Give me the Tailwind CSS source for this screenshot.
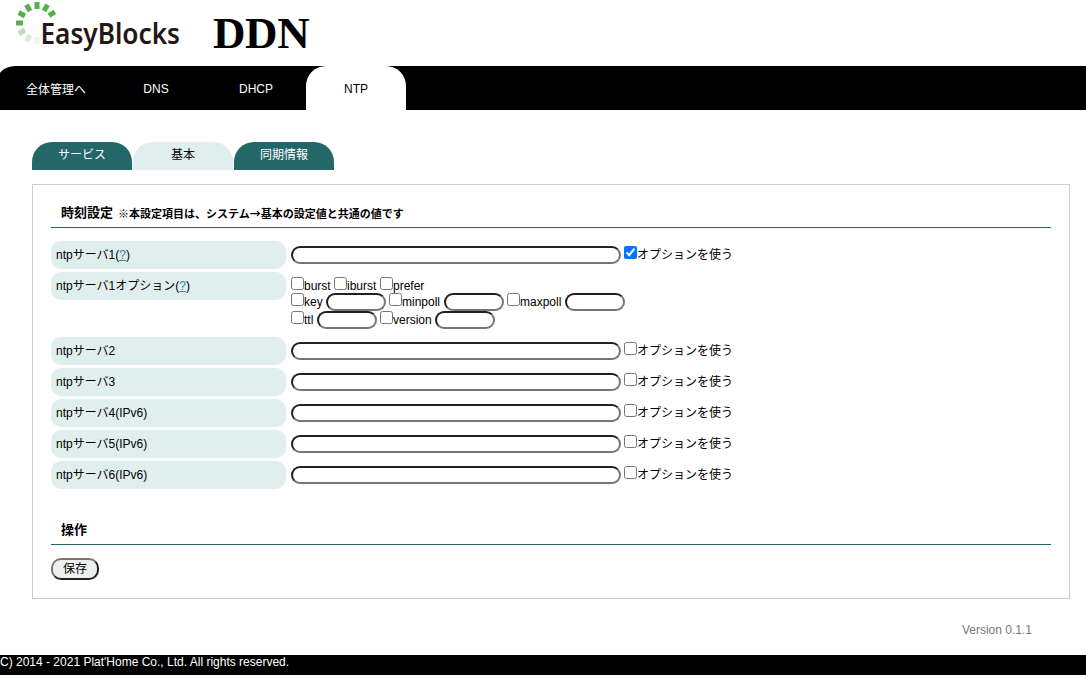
<!DOCTYPE html>
<html lang="ja">
<head>
<meta charset="utf-8">
<title>EasyBlocks DDN</title>
<script src="https://cdn.jsdelivr.net/npm/@tailwindcss/browser@4"></script>
</head>
<body class="h-[681px] overflow-hidden bg-white font-['Liberation_Sans','Noto_Sans_CJK_JP',sans-serif] text-[12px] leading-4 text-black">
<header class="flex h-[66px] items-start">
  <svg class="h-[66px] w-[200px] shrink-0" viewBox="0 0 200 66">
    <g fill="#55b14a">
      <path d="M34.5 2h5v7h-5z"/>
      <path d="M34.5 2h5v7h-5z" transform="rotate(-30 37 23)"/>
      <path d="M34.5 2h5v7h-5z" transform="rotate(-60 37 23)"/>
      <path d="M34.5 2h5v7h-5z" transform="rotate(-90 37 23)"/>
      <path d="M34.5 2h5v7h-5z" transform="rotate(30 37 23)"/>
      <path d="M34.5 2h5v7h-5z" transform="rotate(58 37 23)"/>
      <path d="M34.5 2h5v7h-5z" transform="rotate(-120 37 23)" opacity=".42"/>
      <path d="M34.5 2h5v7h-5z" transform="rotate(-150 37 23)" opacity=".24"/>
      <path d="M34.5 2h5v7h-5z" transform="rotate(180 37 23)" opacity=".12"/>
    </g>
    <text x="40.5" y="44" textLength="139.5" lengthAdjust="spacingAndGlyphs" font-family="Noto Sans, sans-serif" font-size="28" font-weight="600" fill="#231815">EasyBlocks</text>
  </svg>
  <h1 class="ml-[13px] mt-[7px] font-['Liberation_Serif',serif] text-[45px] leading-[52px] font-bold tracking-[-0.4px]">DDN</h1>
</header>
<nav class="-ml-[5px] flex h-11 rounded-tl-[20px] bg-black pl-[11px] text-center leading-[46px] text-white">
  <a class="w-[100px] pt-px">全体管理へ</a>
  <a class="w-[100px]">DNS</a>
  <a class="w-[100px]">DHCP</a>
  <a class="h-11 w-[100px] rounded-t-[20px] bg-white text-black">NTP</a>
</nav>
<div class="mt-8 ml-8 flex gap-px text-center leading-[26px]">
  <a class="h-7 w-[100px] rounded-t-[20px] bg-[#246769] text-white">サービス</a>
  <a class="h-7 w-[100px] rounded-t-[20px] bg-[#e0eeee]">基本</a>
  <a class="h-7 w-[100px] rounded-t-[20px] bg-[#246769] text-white">同期情報</a>
</div>
<main class="mt-[14px] ml-8 h-[415px] w-[1038px] border border-[#ccc] px-[18px]">
  <h2 class="mt-[15px] flex h-[28px] items-center border-b border-[#246769] pb-[2px] pl-[10px] text-[13px] font-bold whitespace-pre">時刻設定<span class="ml-[5px] font-['Noto_Sans_CJK_JP',sans-serif] text-[11px]">※本設定項目は、システム→基本の設定値と共通の値です</span></h2>
  <div class="mt-[13px] flex flex-col gap-[3px]">
    <div class="flex h-7 items-center">
      <div class="h-7 w-[235px] rounded-[10px] bg-[#e0eeee] pl-[5px] leading-7">ntpサーバ1(<a class="text-[#2a8f94] underline">?</a>)</div>
      <input type="text" class="ml-[5px] h-[18px] w-[330px] rounded-[10px] border-2 border-t-[#212121] border-r-[#767676] border-b-[#767676] border-l-[#212121]">
      <input type="checkbox" checked class="mb-[5px] ml-[3px] size-[13px]"><span>オプションを使う</span>
    </div>
    <div class="flex h-[62px]">
      <div class="h-7 w-[235px] rounded-[10px] bg-[#e0eeee] pl-[5px] leading-7">ntpサーバ1オプション(<a class="text-[#2a8f94] underline">?</a>)</div>
      <div class="ml-[5px] flex flex-col pt-[5px] leading-[18px]">
        <div class="flex h-4 items-start"><input type="checkbox" class="size-[13px]"><span class="w-[30px]">burst</span><input type="checkbox" class="size-[13px]"><span class="w-[33px]">iburst</span><input type="checkbox" class="size-[13px]"><span>prefer</span></div>
        <div class="flex h-[18px] items-start">
          <input type="checkbox" class="size-[13px]"><span class="w-[22px]">key</span><input type="text" class="h-[18px] w-[60px] rounded-[10px] border-2 border-t-[#212121] border-r-[#767676] border-b-[#767676] border-l-[#212121]">
          <input type="checkbox" class="ml-[3px] size-[13px]"><span class="w-[42px]">minpoll</span><input type="text" class="h-[18px] w-[60px] rounded-[10px] border-2 border-t-[#212121] border-r-[#767676] border-b-[#767676] border-l-[#212121]">
          <input type="checkbox" class="ml-[3px] size-[13px]"><span class="w-[45px]">maxpoll</span><input type="text" class="h-[18px] w-[60px] rounded-[10px] border-2 border-t-[#212121] border-r-[#767676] border-b-[#767676] border-l-[#212121]">
        </div>
        <div class="flex h-[18px] items-start">
          <input type="checkbox" class="size-[13px]"><span class="w-[13px]">ttl</span><input type="text" class="h-[18px] w-[60px] rounded-[10px] border-2 border-t-[#212121] border-r-[#767676] border-b-[#767676] border-l-[#212121]">
          <input type="checkbox" class="ml-[3px] size-[13px]"><span class="w-[42px]">version</span><input type="text" class="h-[18px] w-[60px] rounded-[10px] border-2 border-t-[#212121] border-r-[#767676] border-b-[#767676] border-l-[#212121]">
        </div>
      </div>
    </div>
    <div class="flex h-7 items-center">
      <div class="h-7 w-[235px] rounded-[10px] bg-[#e0eeee] pl-[5px] leading-7">ntpサーバ2</div>
      <input type="text" class="ml-[5px] h-[18px] w-[330px] rounded-[10px] border-2 border-t-[#212121] border-r-[#767676] border-b-[#767676] border-l-[#212121]">
      <input type="checkbox" class="mb-[5px] ml-[3px] size-[13px]"><span>オプションを使う</span>
    </div>
    <div class="flex h-7 items-center">
      <div class="h-7 w-[235px] rounded-[10px] bg-[#e0eeee] pl-[5px] leading-7">ntpサーバ3</div>
      <input type="text" class="ml-[5px] h-[18px] w-[330px] rounded-[10px] border-2 border-t-[#212121] border-r-[#767676] border-b-[#767676] border-l-[#212121]">
      <input type="checkbox" class="mb-[5px] ml-[3px] size-[13px]"><span>オプションを使う</span>
    </div>
    <div class="flex h-7 items-center">
      <div class="h-7 w-[235px] rounded-[10px] bg-[#e0eeee] pl-[5px] leading-7">ntpサーバ4(IPv6)</div>
      <input type="text" class="ml-[5px] h-[18px] w-[330px] rounded-[10px] border-2 border-t-[#212121] border-r-[#767676] border-b-[#767676] border-l-[#212121]">
      <input type="checkbox" class="mb-[5px] ml-[3px] size-[13px]"><span>オプションを使う</span>
    </div>
    <div class="flex h-7 items-center">
      <div class="h-7 w-[235px] rounded-[10px] bg-[#e0eeee] pl-[5px] leading-7">ntpサーバ5(IPv6)</div>
      <input type="text" class="ml-[5px] h-[18px] w-[330px] rounded-[10px] border-2 border-t-[#212121] border-r-[#767676] border-b-[#767676] border-l-[#212121]">
      <input type="checkbox" class="mb-[5px] ml-[3px] size-[13px]"><span>オプションを使う</span>
    </div>
    <div class="flex h-7 items-center">
      <div class="h-7 w-[235px] rounded-[10px] bg-[#e0eeee] pl-[5px] leading-7">ntpサーバ6(IPv6)</div>
      <input type="text" class="ml-[5px] h-[18px] w-[330px] rounded-[10px] border-2 border-t-[#212121] border-r-[#767676] border-b-[#767676] border-l-[#212121]">
      <input type="checkbox" class="mb-[5px] ml-[3px] size-[13px]"><span>オプションを使う</span>
    </div>
  </div>
  <h2 class="mt-[28px] flex h-[28px] items-center border-b border-[#246769] pb-[2px] pl-[10px] text-[13px] font-bold">操作</h2>
  <button class="mt-[13px] flex h-[22px] w-12 items-center justify-center rounded-[10px] border-2 border-t-[#767676] border-r-[#212121] border-b-[#212121] border-l-[#767676] bg-[#efefef]">保存</button>
</main>
<p class="mt-[23px] mr-[54px] text-right text-[#777]">Version 0.1.1</p>
<footer class="mt-[17px] h-5 bg-black leading-[14px] text-white">C) 2014 - 2021 Plat'Home Co., Ltd. All rights reserved.</footer>
</body>
</html>
